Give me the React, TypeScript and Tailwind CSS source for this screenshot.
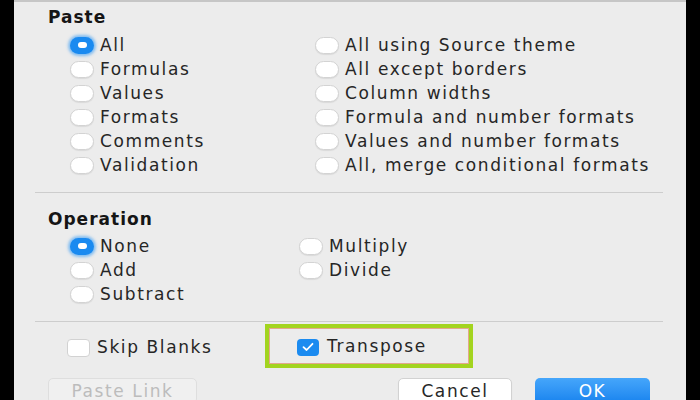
import React from "react"

const font = { fontFamily: '"DejaVu Sans", Verdana, sans-serif' }

function Radio({ checked }: { checked?: boolean }) {
  if (checked) {
    return (
      <span className="flex h-[17px] w-[24px] shrink-0 items-center justify-center rounded-full bg-[#1a8af0] shadow-[0_0_3px_2px_rgba(40,150,245,0.55)]">
        <span className="h-[6px] w-[9px] rounded-full bg-white" />
      </span>
    )
  }
  return (
    <span className="h-[17px] w-[24px] shrink-0 rounded-full border border-[#d3d3d3] bg-white shadow-[0_1px_1px_rgba(0,0,0,0.08)]" />
  )
}

function Option({ label, checked }: { label: string; checked?: boolean }) {
  return (
    <div className="flex h-[24px] items-center gap-[6px]">
      <Radio checked={checked} />
      <span className="text-[17px] leading-none tracking-[1.6px] text-[#262626]">{label}</span>
    </div>
  )
}

const pasteLeft = ["All", "Formulas", "Values", "Formats", "Comments", "Validation"]
const pasteRight = [
  "All using Source theme",
  "All except borders",
  "Column widths",
  "Formula and number formats",
  "Values and number formats",
  "All, merge conditional formats",
]

export default function App() {
  return (
    <div className="flex h-[400px] w-[700px] overflow-hidden bg-black" style={font}>
      <div className="ml-[14px] flex h-full w-[672px] flex-col border-t-2 border-[#c6c6c6] bg-[#ececec]">
        {/* Paste */}
        <div className="ml-[34px] mt-[6px] flex h-[20px] items-center text-[17px] font-bold tracking-[1px] text-[#151515]">
          Paste
        </div>
        <div className="ml-[56px] mt-[5px] grid grid-cols-[245px_1fr]">
          {pasteLeft.map((l, i) => (
            <React.Fragment key={l}>
              <Option label={l} checked={i === 0} />
              <Option label={pasteRight[i]} />
            </React.Fragment>
          ))}
        </div>
        <div className="ml-[21px] mr-[23px] mt-[15px] h-px shrink-0 bg-[#cdcdcd]" />

        {/* Operation */}
        <div className="ml-[34px] mt-[17px] flex h-[20px] items-center text-[17px] font-bold tracking-[1px] text-[#151515]">
          Operation
        </div>
        <div className="ml-[56px] mt-[4px] grid grid-cols-[229px_1fr]">
          <Option label="None" checked />
          <Option label="Multiply" />
          <Option label="Add" />
          <Option label="Divide" />
          <Option label="Subtract" />
        </div>
        <div className="ml-[21px] mr-[23px] mt-[15px] h-px shrink-0 bg-[#cdcdcd]" />

        {/* Checkboxes */}
        <div className="mt-[2px] flex h-[44px] items-center">
          <div className="ml-[53px] flex w-[198px] items-center gap-[7px] pt-[3px]">
            <span className="h-[18px] w-[23px] shrink-0 rounded-[4px] border border-[#d2d2d2] bg-white" />
            <span className="text-[17px] tracking-[1.6px] text-[#262626]">Skip Blanks</span>
          </div>
          <div className="flex h-[44px] w-[208px] items-center border-4 border-[#a3d41f]">
            <div className="flex h-full w-full items-center gap-[8px] border border-[#e3a88c] pl-[27px] pt-[2px]">
              <span className="flex h-[17px] w-[22px] shrink-0 items-center justify-center rounded-[4px] bg-[#1b8bf0]">
                <svg width="12" height="10" viewBox="0 0 12 10" fill="none">
                  <path d="M1.5 5.2 4.6 8 10.5 1.8" stroke="white" strokeWidth="1.8" strokeLinecap="round" strokeLinejoin="round" />
                </svg>
              </span>
              <span className="text-[17px] tracking-[1.6px] text-[#262626]">Transpose</span>
            </div>
          </div>
        </div>

        {/* Buttons */}
        <div className="mt-[10px] flex items-start">
          <div className="ml-[34px] flex h-[26px] w-[149px] items-center justify-center rounded-[5px] border border-[#dedede] bg-[#f0f0f0] text-[17px] leading-none tracking-[1.6px] text-[#bcbcbc]">
            Paste Link
          </div>
          <div className="ml-[201px] flex h-[26px] w-[114px] items-center justify-center rounded-[5px] border border-[#d2d2d2] bg-white text-[17px] leading-none tracking-[1.6px] text-[#262626] shadow-[0_1px_1px_rgba(0,0,0,0.1)]">
            Cancel
          </div>
          <div className="ml-[23px] flex h-[26px] w-[115px] items-center justify-center rounded-[5px] bg-gradient-to-b from-[#45a6fb] to-[#1482ee] text-[17px] leading-none tracking-[1.6px] text-white">
            OK
          </div>
        </div>
      </div>
    </div>
  )
}
